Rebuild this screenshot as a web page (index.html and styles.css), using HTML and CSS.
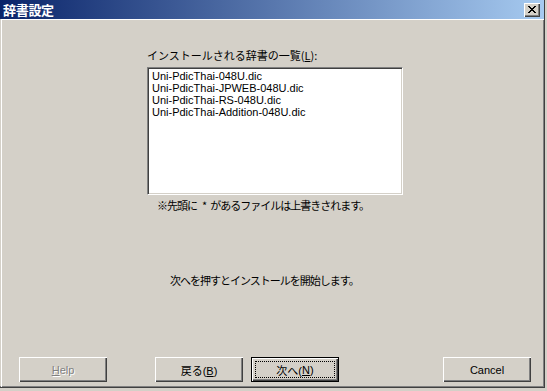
FILE: index.html
```html
<!DOCTYPE html>
<html lang="ja">
<head>
  <meta charset="UTF-8" />
  <title>辞書設定</title>
  <link rel="stylesheet" href="styles.css">
</head>
<body>
  <div class="window">
    <div class="titlebar">
      <span class="title">辞書設定</span>
      <button class="close-btn" aria-label="close">
        <svg width="8" height="7" viewBox="0 0 8 7">
          <path d="M0 0 L7 7 M1 0 L8 7 M7 0 L0 7 M8 0 L1 7" stroke="#000" stroke-width="1" fill="none"/>
        </svg>
      </button>
    </div>
    <div class="client">
      <div class="dict-panel">
        <label class="caption">インストールされる辞書の一覧(<u>L</u>):</label>
        <ul class="listbox">
          <li>Uni-PdicThai-048U.dic</li>
          <li>Uni-PdicThai-JPWEB-048U.dic</li>
          <li>Uni-PdicThai-RS-048U.dic</li>
          <li>Uni-PdicThai-Addition-048U.dic</li>
        </ul>
        <p class="note">※先頭に<span class="mark">*</span>があるファイルは上書きされます。</p>
      </div>
      <p class="message">次へを押すとインストールを開始します。</p>
      <div class="buttons">
        <button class="btn btn-help" disabled><u>H</u>elp</button>
        <button class="btn btn-back">戻る(<u>B</u>)</button>
        <button class="btn btn-next"><span class="focus">次へ(<u>N</u>)</span></button>
        <button class="btn btn-cancel">Cancel</button>
      </div>
    </div>
  </div>
</body>
</html>
```

FILE: styles.css
```css
* {
  margin: 0;
  padding: 0;
  box-sizing: border-box;
}
body {
  background: #d4d0c8;
  font-family: "Noto Sans CJK JP", sans-serif;
  font-size: 11px;
  color: #000;
  width: 547px;
  height: 391px;
  overflow: hidden;
}
.window {
  width: 545px;
  height: 388px;
  display: flex;
  flex-direction: column;
  border-right: 1px solid #404040;
  border-bottom: 1px solid #404040;
  box-shadow: inset -1px -1px #808080;
}
.titlebar {
  height: 19px;
  display: flex;
  align-items: center;
  justify-content: space-between;
  padding: 0 4px 0 3px;
  background: linear-gradient(to right, #0a246a, #a6caf0);
}
.title {
  color: #fff;
  font-weight: bold;
  font-size: 13px;
  line-height: 19px;
  letter-spacing: -0.3px;
}
.close-btn {
  width: 16px;
  height: 14px;
  display: flex;
  align-items: center;
  justify-content: center;
  background: #d4d0c8;
  border: none;
  box-shadow: inset 1px 1px #fff, inset -1px -1px #404040, inset -2px -2px #808080;
}
.client {
  flex: 1;
  display: flex;
  flex-direction: column;
  border-left: 1px solid #fff;
  margin-left: 1px;
  border-top: 1px solid #fff;
  padding-bottom: 5px;
}
.dict-panel {
  margin-left: 145px;
  margin-top: 28px;
  width: 256px;
}
.caption {
  display: block;
  line-height: 14px;
}
.caption u, .btn u {
  text-decoration: underline;
}
.listbox {
  list-style: none;
  margin-top: 5px;
  height: 128px;
  background: #fff;
  border-top: 1px solid #808080;
  border-left: 1px solid #808080;
  border-right: 1px solid #fff;
  border-bottom: 1px solid #fff;
  box-shadow: inset 1px 1px #404040, inset -1px -1px #d4d0c8;
  padding: 2px 0 0 4px;
  font-family: "Liberation Sans", Arial, sans-serif;
  font-size: 11px;
  line-height: 12px;
}
.note {
  margin-top: 3px;
  margin-left: 10px;
  line-height: 14px;
  letter-spacing: -1px;
}
.note .mark {
  margin: 0 4px 0 5px;
}
.message {
  margin-top: 61px;
  margin-left: 168px;
  line-height: 14px;
  letter-spacing: -1px;
}
.buttons {
  margin-top: auto;
  display: flex;
  padding-left: 17px;
}
.btn {
  width: 88px;
  height: 25px;
  background: #d4d0c8;
  border: none;
  font-family: "Liberation Sans", "Noto Sans CJK JP", sans-serif;
  font-size: 11px;
  color: #000;
  box-shadow: inset 1px 1px #fff, inset -1px -1px #404040, inset -2px -2px #808080;
}
.btn-help {
  color: #808080;
  text-shadow: 1px 1px #fff;
}
.btn-back {
  margin-left: 48px;
}
.btn-next {
  margin-left: 8px;
  display: flex;
  align-items: center;
  justify-content: center;
  padding: 4px;
  box-shadow: inset 0 0 0 1px #000, inset 2px 2px #fff, inset -2px -2px #404040, inset -3px -3px #808080;
}
.btn-next .focus {
  flex: 1;
  height: 100%;
  display: flex;
  align-items: center;
  justify-content: center;
  border: 1px dotted #000;
}
.btn-cancel {
  margin-left: 104px;
}
```
